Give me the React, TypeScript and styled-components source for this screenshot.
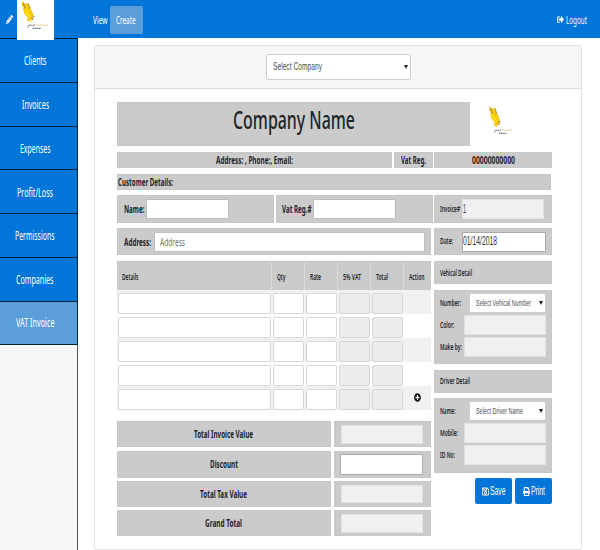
import React, { useLayoutEffect, useRef, useState } from "react";
import styled, { createGlobalStyle } from "styled-components";
import { FaPencilAlt, FaSignOutAlt, FaPlusCircle, FaRegSave, FaPrint } from "react-icons/fa";

const GlobalStyle = createGlobalStyle`
  * { box-sizing: border-box; }
  body { margin: 0; background: #fff; color: #212529; font-family: "Noto Sans", "Open Sans", sans-serif; overflow: hidden; }
`;

/* ---------- condensed text ---------- */
const FitBox = styled.span<{ $w: number }>`
  display: inline-block;
  flex: none;
  width: ${(p) => p.$w}px;
  white-space: nowrap;
  line-height: 1.2;
`;
const FitInner = styled.span`
  display: inline-block;
  transform-origin: 0 50%;
`;
function Fit({ w, children }: { w: number; children: string }) {
  const ref = useRef<HTMLSpanElement>(null);
  const [scale, setScale] = useState(1);
  useLayoutEffect(() => {
    if (ref.current) setScale(w / parseFloat(getComputedStyle(ref.current).width));
  }, [w, children]);
  return (
    <FitBox $w={w}>
      <FitInner ref={ref} style={{ transform: `scaleX(${scale})` }}>{children}</FitInner>
    </FitBox>
  );
}

/* ---------- frame ---------- */
const Page = styled.div`
  width: 600px;
  height: 550px;
  display: grid;
  grid-template: 38px 512px / 78px 522px;
`;
const TopBar = styled.header`
  grid-column: 1 / 3;
  display: flex;
  align-items: center;
  background: #0275d8;
  color: #fff;
  font-size: 11.5px;
  padding: 1px 13.5px 0 6px;
  z-index: 1;
`;
const Brand = styled.div`
  align-self: flex-start;
  width: 37px;
  height: 40px;
  margin: -1px 39px 0 4px;
  background: #fff;
`;
const PencilIcon = styled(FaPencilAlt)`
  width: 7px;
  height: 9px;
`;
const CreateTab = styled.div`
  width: 33px;
  height: 28px;
  margin-left: 2px;
  display: flex;
  align-items: center;
  justify-content: center;
  background: #5b9fda;
  border-radius: 2px;
`;
const Logout = styled.div`
  margin-left: auto;
  display: flex;
  align-items: center;
  gap: 2px;
  svg { width: 7px; height: 9px; }
`;
const Sidebar = styled.nav`
  background: #f7f7f7;
  border-right: 1px solid #555;
  height: 512px;
`;
const NavItem = styled.div<{ $active?: boolean }>`
  height: 43.8px;
  width: 78px;
  padding: 2px 7px 0 0;
  display: flex;
  align-items: center;
  justify-content: center;
  font-size: 12px;
  color: #fff;
  background: ${(p) => (p.$active ? "#5b9fda" : "#0275d8")};
  border: solid #06203c;
  border-width: 1px 1px 0 0;
  &:last-child { border-bottom-width: 1px; }
`;
const Main = styled.main`
  padding: 7px 18px 0 16px;
`;
const Card = styled.section`
  height: 505px;
  border: 1px solid #e2e2e4;
  border-radius: 2px;
`;
const CardHead = styled.div`
  height: 43px;
  background: #f6f6f9;
  border-bottom: 1px solid #dcdcde;
  display: flex;
  padding: 8px 0 0 171px;
`;

/* ---------- fields ---------- */
const SelectBox = styled.div<{ $w: number; $h: number; $pad: number }>`
  flex: none;
  width: ${(p) => p.$w}px;
  height: ${(p) => p.$h}px;
  padding: 0 2px 0 ${(p) => p.$pad}px;
  display: flex;
  align-items: center;
  justify-content: space-between;
  background: #fff;
  border: 1px solid #cfcfd3;
  border-radius: 2px;
  color: #495057;
  font-family: "Liberation Sans", Arial, sans-serif;
  font-size: ${(p) => (p.$h > 22 ? 11.5 : 9.8)}px;
`;
const Caret = styled.i`
  border: solid transparent;
  border-width: 4px 2px 0;
  border-top-color: #222;
`;
type FieldKind = "edit" | "raised" | "readonly";
const Field = styled.div<{ $w: number; $h?: number; $kind?: FieldKind }>`
  flex: none;
  width: ${(p) => p.$w}px;
  height: ${(p) => p.$h ?? 20}px;
  display: flex;
  align-items: center;
  background: ${(p) => (p.$kind === "readonly" ? "#f0f0f0" : "#fff")};
  border: ${(p) => (p.$kind === "readonly" ? "1px solid #e3e3e3" : p.$kind === "raised" ? "1px solid #aaa" : "1px solid #bebebe")};
  border-radius: ${(p) => (p.$kind ? 0 : 1)}px;
  font-family: "Liberation Sans", Arial, sans-serif;
  font-weight: 400;
  font-size: 12px;
  color: #333;
`;
const Placeholder = styled.span`
  padding: 1px 0 0 5px;
  color: #6c757d;
  font-family: "Noto Sans", sans-serif;
  font-size: 10.5px;
  line-height: 1;
`;
const Gap = styled.span<{ $w: number }>`
  flex: none;
  width: ${(p) => p.$w}px;
`;

/* ---------- invoice ---------- */
const Body = styled.div`
  padding: 13px 0 0 22px;
  width: 457px;
`;
const Cell = styled.div<{ $center?: boolean; $pad?: number }>`
  background: #cbcbcb;
  border: 1px solid #c7c7c7;
  display: flex;
  align-items: center;
  justify-content: ${(p) => (p.$center ? "center" : "flex-start")};
  padding-left: ${(p) => p.$pad ?? 0}px;
  font-weight: 700;
  font-size: 10px;
  color: #212529;
`;
const TitleRow = styled.div`
  display: grid;
  grid-template-columns: 353px 81px;
  height: 44px;
  margin-bottom: 6px;
`;
const Title = styled(Cell)`
  font-size: 25.5px;
  font-weight: 500;
  padding: 0 0 10px 0;
`;
const TitleLogo = styled.div`
  padding: 3px 0 0 15px;
`;
const Row = styled.div<{ $cols: string; $h: number; $mb: number; $gap?: number }>`
  display: grid;
  grid-template-columns: ${(p) => p.$cols};
  column-gap: ${(p) => p.$gap ?? 1.5}px;
  height: ${(p) => p.$h}px;
  margin-bottom: ${(p) => p.$mb}px;
`;
const Tag = styled.div<{ $w: number }>`
  width: ${(p) => p.$w}px;
  flex: none;
  font-size: 8.6px;
  line-height: 1;
  font-weight: 600;
`;
const Columns = styled.div`
  display: grid;
  grid-template-columns: 314px 118px;
  column-gap: 3px;
`;
const ItemTable = styled.div`
  width: 314px;
`;
const itemColumns = "154.5px 33px 33px 33.5px 33px 27px";
const HeadRow = styled.div`
  display: grid;
  grid-template-columns: ${itemColumns};
  height: 29px;
  background: #cbcbcb;
  border-top: 1px solid #c4c4c4;
  font-size: 8.6px;
  font-weight: 600;
`;
const HeadCell = styled.div`
  display: flex;
  align-items: center;
  padding: 2px 0 0 5px;
  border-right: 1px solid #dadada;
  &:last-child { border-right: 0; }
`;
const ItemRow = styled.div<{ $odd: boolean }>`
  display: grid;
  grid-template-columns: ${itemColumns};
  height: 24.1px;
  padding-top: 2.5px;
  background: ${(p) => (p.$odd ? "#f1f1f1" : "#fff")};
`;
const ItemField = styled.div<{ $off?: boolean }>`
  height: 21px;
  margin: 0 1px;
  border: 1px solid #d6d7d9;
  border-radius: 2px;
  background: ${(p) => (p.$off ? "#ebedef" : "#fff")};
`;
const AddCell = styled.div`
  display: flex;
  align-items: center;
  justify-content: center;
  padding-bottom: 4px;
  svg { width: 7px; height: 9px; color: #111; }
`;
const Totals = styled.div`
  display: grid;
  grid-template: 26px 27px 26px 26px / 213.5px 97px;
  gap: 3.3px 3.5px;
  margin-top: 11px;
`;
const TotalLabel = styled(Cell)`
  padding-bottom: 1px;
`;
const TotalValue = styled(Cell)`
  padding-right: 2px;
`;
const SideHead = styled(Cell)`
  height: 23px;
  margin-bottom: 5.5px;
  padding: 1px 0 0 5px;
`;
const SideBlock = styled(Cell)`
  height: 74.5px;
  margin-bottom: 5.5px;
  padding: 2px 0 0 5px;
  flex-direction: column;
  align-items: stretch;
  justify-content: flex-start;
  gap: 1.5px;
`;
const SideLine = styled.div`
  display: flex;
  align-items: center;
  height: 20.5px;
  font-weight: 400;
`;
const Actions = styled.div`
  display: flex;
  justify-content: flex-end;
  gap: 3px;
`;
const Button = styled.button`
  width: 37px;
  height: 26px;
  padding: 0;
  border: 0;
  border-radius: 2px;
  background: #0275d8;
  color: #fff;
  font-family: "Liberation Sans", Arial, sans-serif;
  font-size: 12px;
  display: flex;
  align-items: center;
  justify-content: center;
  gap: 1px;
  svg { width: 7px; height: 9px; }
`;
const Drawing = styled.svg`
  display: block;
`;

function EagleLogo({ w, h }: { w: number; h: number }) {
  return (
    <Drawing width={w} height={h} viewBox="0 0 37 40" preserveAspectRatio="none">
      <path d="M5 1.5 L8 4 L11 3 L13 7 L15.5 12 L17 16.5 L15 17 L16.5 20 L13.5 20 L14.5 22.5 L12 21 L9.5 20.5 L11 18 L7.5 14 L6 9 L7 8 L5 5 Z" fill="#f6c915" />
      <path d="M8 4.5 L10 11 L14 17 L12 17.5 L8.5 12 Z" fill="#ffe600" />
      <path d="M5 1.5 L8 5 L6 4.5 L8.5 8 L6.5 8 M11 3 L13 8 L12 8 M14 18 L17 16 L15 20" stroke="#a9812e" strokeWidth="0.8" fill="none" />
      <path d="M10.5 27.5 q1 -3 1.8 -2.2 q0.5 -1.5 1.2 0.4 q0.8 -1 1.5 0 q0.8 -0.8 1.4 0.2 l1.6 -2" stroke="#6d6d78" strokeWidth="0.9" fill="none" />
      <path d="M19.5 26 q1.2 -2.6 2 -1.2 q1 1.8 2 0.4 q1 -1.2 1.8 0.2 q1.2 0.8 2 -0.4 q1 0.8 3.2 -0.2" stroke="#e0bd7a" strokeWidth="0.9" fill="none" />
      <path d="M15.5 28.4 H24" stroke="#77777f" strokeWidth="1.1" strokeDasharray="1.6 .4" />
    </Drawing>
  );
}

const NAV: [string, number][] = [
  ["Clients", 22.5], ["Invoices", 27], ["Expenses", 30.5], ["Profit/Loss", 36],
  ["Permissions", 39.5], ["Companies", 37.5], ["VAT Invoice", 38.5],
];
const HEADS: [string, number][] = [["Details", 16.5], ["Qty", 8.5], ["Rate", 11], ["5% VAT", 18], ["Total", 12], ["Action", 15.5]];
const TOTALS: [string, number][] = [["Total Invoice Value", 59], ["Discount", 28], ["Total Tax Value", 47], ["Grand Total", 37]];

interface SideProps {
  title: [string, number];
  first: [string, number];
  choice: [string, number];
  rest: [string, number][];
}
function SidePanel({ title, first, choice, rest }: SideProps) {
  return (
    <>
      <SideHead><Tag $w={40}><Fit w={title[1]}>{title[0]}</Fit></Tag></SideHead>
      <SideBlock>
        <SideLine>
          <Tag $w={28.5}><Fit w={first[1]}>{first[0]}</Fit></Tag>
          <SelectBox $w={77} $h={20} $pad={6}><Fit w={choice[1]}>{choice[0]}</Fit><Caret /></SelectBox>
        </SideLine>
        {rest.map(([t, w]) => (
          <SideLine key={t}>
            <Tag $w={24}><Fit w={w}>{t}</Fit></Tag>
            <Field $w={81.5} $kind="readonly" />
          </SideLine>
        ))}
      </SideBlock>
    </>
  );
}

export default function App() {
  return (
    <>
      <GlobalStyle />
      <Page>
        <TopBar>
          <PencilIcon preserveAspectRatio="none" />
          <Brand><EagleLogo w={37} h={40} /></Brand>
          <Fit w={14.5}>View</Fit>
          <CreateTab><Fit w={19.5}>Create</Fit></CreateTab>
          <Logout><FaSignOutAlt preserveAspectRatio="none" /><Fit w={21}>Logout</Fit></Logout>
        </TopBar>
        <Sidebar>
          {NAV.map(([t, w]) => (
            <NavItem key={t} $active={t === "VAT Invoice"}><Fit w={w}>{t}</Fit></NavItem>
          ))}
        </Sidebar>
        <Main>
          <Card>
            <CardHead>
              <SelectBox $w={145} $h={26} $pad={6}><Fit w={49}>Select Company</Fit><Caret /></SelectBox>
            </CardHead>
            <Body>
              <TitleRow>
                <Title $center><Fit w={122}>Company Name</Fit></Title>
                <TitleLogo><EagleLogo w={33} h={40} /></TitleLogo>
              </TitleRow>
              <Row $cols="275px 39px 1fr" $h={16} $mb={6}>
                <Cell $center><Fit w={77}>Address: , Phone:, Email:</Fit></Cell>
                <Cell $center><Fit w={25}>Vat Reg.</Fit></Cell>
                <Cell $center><Fit w={43}>00000000000</Fit></Cell>
              </Row>
              <Row $cols="434px" $h={16} $mb={5}>
                <Cell><Fit w={55}>Customer Details:</Fit></Cell>
              </Row>
              <Row $cols="157px 157px 1fr" $h={28} $mb={5}>
                <Cell $pad={5.5}><Fit w={20.5}>Name:</Fit><Gap $w={2} /><Field $w={83} /></Cell>
                <Cell $pad={5}><Fit w={29.5}>Vat Reg.#</Fit><Gap $w={2} /><Field $w={83} /></Cell>
                <Cell $pad={5}><Tag $w={21.5}><Fit w={20}>Invoice#</Fit></Tag><Field $w={82} $kind="readonly"><Fit w={3}>1</Fit></Field></Cell>
              </Row>
              <Row $cols="314px 1fr" $h={27} $mb={6} $gap={3}>
                <Cell $pad={5.5}><Fit w={27}>Address:</Fit><Gap $w={3} /><Field $w={271}><Placeholder><Fit w={25}>Address</Fit></Placeholder></Field></Cell>
                <Cell $pad={5}><Tag $w={22}><Fit w={13}>Date:</Fit></Tag><Field $w={84} $kind="raised"><Fit w={34}>01/14/2018</Fit></Field></Cell>
              </Row>
              <Columns>
                <ItemTable>
                  <HeadRow>{HEADS.map(([t, w]) => <HeadCell key={t}><Fit w={w}>{t}</Fit></HeadCell>)}</HeadRow>
                  {[0, 1, 2, 3, 4].map((i) => (
                    <ItemRow key={i} $odd={i % 2 === 0}>
                      <ItemField /><ItemField /><ItemField /><ItemField $off /><ItemField $off />
                      <AddCell>{i === 4 && <FaPlusCircle preserveAspectRatio="none" />}</AddCell>
                    </ItemRow>
                  ))}
                  <Totals>
                    {TOTALS.map(([t, w]) => (
                      <React.Fragment key={t}>
                        <TotalLabel $center><Fit w={w}>{t}</Fit></TotalLabel>
                        <TotalValue $center>
                          <Field $w={t === "Discount" ? 83 : 82} $h={t === "Discount" ? 21 : 18.5} $kind={t === "Discount" ? "raised" : "readonly"} />
                        </TotalValue>
                      </React.Fragment>
                    ))}
                  </Totals>
                </ItemTable>
                <div>
                  <SidePanel title={["Vehical Detail", 32]} first={["Number:", 21]} choice={["Select Vehical Number", 55]} rest={[["Color:", 14.5], ["Make by:", 22]]} />
                  <SidePanel title={["Driver Detail", 30]} first={["Name:", 15.5]} choice={["Select Driver Name", 47]} rest={[["Mobile:", 18], ["ID No:", 15]]} />
                  <Actions>
                    <Button><FaRegSave preserveAspectRatio="none" /><Fit w={15.5}>Save</Fit></Button>
                    <Button><FaPrint preserveAspectRatio="none" /><Fit w={14}>Print</Fit></Button>
                  </Actions>
                </div>
              </Columns>
            </Body>
          </Card>
        </Main>
      </Page>
    </>
  );
}
